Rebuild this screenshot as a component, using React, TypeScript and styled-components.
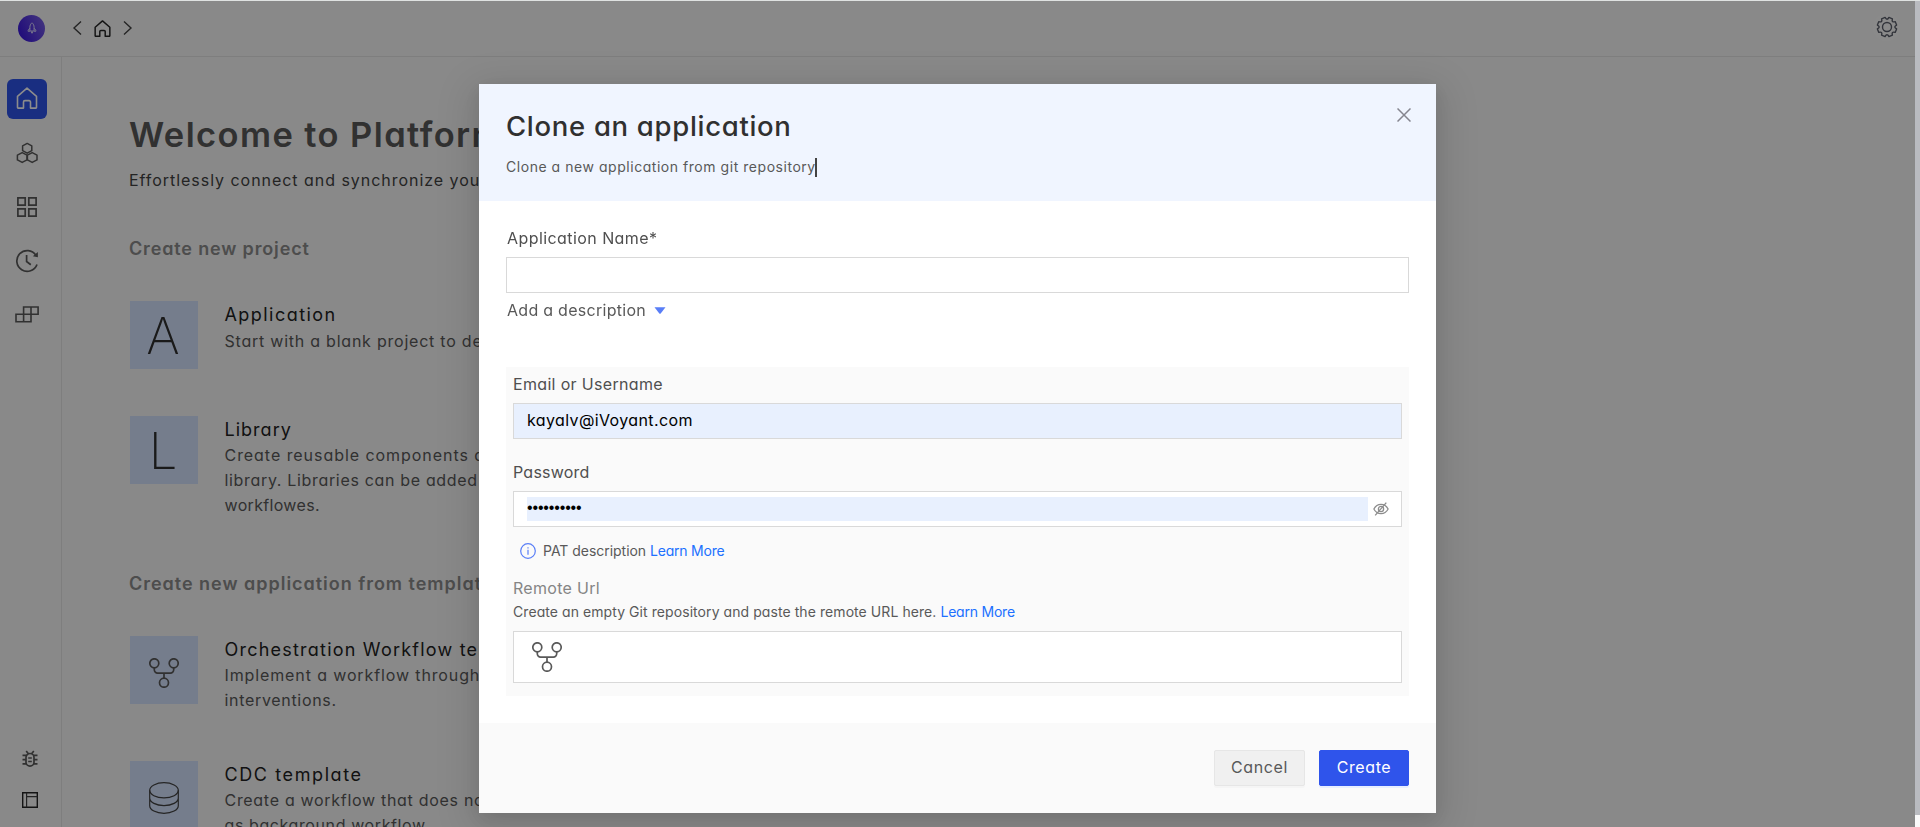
import React from 'react';
import styled, { createGlobalStyle, css } from 'styled-components';

const GlobalStyle = createGlobalStyle`
  *, *::before, *::after { box-sizing: border-box; }
  body {
    margin: 0;
    overflow: hidden;
    background: #fafafa;
    font-family: Inter, 'Open Sans', 'Liberation Sans', sans-serif;
    font-feature-settings: 'cv11';
    font-size: 16px;
    font-weight: 400;
    color: #595959;
  }
  h1, h2, h3, p { margin: 0; font-weight: 400; }
`;

/* ---------- shell ---------- */

const Shell = styled.div`
  display: flex;
  flex-direction: column;
  height: 100vh;
  overflow: hidden;
  border-top: 1px solid #dfe2e1;
`;

const TopBar = styled.header`
  display: flex;
  flex: none;
  align-items: center;
  justify-content: space-between;
  height: 56px;
  padding: 0 20px 1px 18px;
  border-bottom: 1px solid #e6e6e6;
`;

const TopGroup = styled.div`
  display: flex;
  align-items: center;
`;

const Logo = styled.span`
  display: flex;
  align-items: center;
  justify-content: center;
  width: 27px;
  height: 27px;
  margin-right: 27px;
  border-radius: 50%;
  background: linear-gradient(65deg, #3a16e0 10%, #7a60e6 95%);
`;

const NavIcons = styled.nav`
  display: flex;
  align-items: center;
  gap: 11px;
`;

const GearHolder = styled.span`
  display: flex;
  align-items: center;
  justify-content: center;
  width: 27px;
  height: 27px;
  margin-bottom: 2px;
  border-radius: 50%;
  background: #fcfcfc;
`;

const Body = styled.div`
  display: flex;
  flex: 1;
  min-height: 0;
`;

const Sidebar = styled.aside`
  display: flex;
  flex: none;
  flex-direction: column;
  justify-content: space-between;
  width: 62px;
  padding: 22px 0 19px 7px;
  border-right: 1px solid #e6e6e6;
`;

const SideGroup = styled.div<{ $gap: number; $inset?: number }>`
  display: flex;
  flex-direction: column;
  gap: ${(p) => p.$gap}px;
  padding-left: ${(p) => p.$inset ?? 0}px;
`;

const SideButton = styled.span<{ $active?: boolean }>`
  display: flex;
  align-items: center;
  justify-content: center;
  width: 40px;
  height: 40px;
  padding-bottom: 1px;
  border-radius: 6px;
  ${(p) =>
    p.$active &&
    css`
      padding-bottom: 2px;
      background: #2f54eb;
    `}
`;

const Main = styled.main`
  flex: 1;
  padding: 56px 0 0 67px;
  overflow: hidden;
`;

const PageTitle = styled.h1`
  font-size: 34.5px;
  font-weight: 600;
  line-height: 44px;
  letter-spacing: 1.4px;
  white-space: nowrap;
`;

const PageSubtitle = styled.p`
  margin-top: 10px;
  color: #434343;
  line-height: 26px;
  letter-spacing: 0.96px;
  white-space: nowrap;
`;

const SectionTitle = styled.h2<{ $top: number; $spacing: number }>`
  margin: ${(p) => p.$top}px 0 38px;
  color: #8c8c8c;
  font-size: 18px;
  font-weight: 600;
  line-height: 28px;
  letter-spacing: ${(p) => p.$spacing}px;
`;

const CardList = styled.div<{ $gap: number }>`
  display: flex;
  flex-direction: column;
  gap: ${(p) => p.$gap}px;
  padding-left: 1px;
`;

const Card = styled.article`
  display: flex;
  align-items: flex-start;
  gap: 26.5px;
`;

const CardTile = styled.div<{ $glyph?: boolean }>`
  display: flex;
  flex: none;
  align-items: center;
  justify-content: center;
  width: 68px;
  height: 68px;
  padding: ${(p) => (p.$glyph ? '1px 2px 0 0' : '5px 0 0')};
  background: #d6e4ff;
  color: #303030;
  font-size: 51px;
  font-weight: 200;
  line-height: 67px;
`;

const CardTitle = styled.h3<{ $spacing: number }>`
  color: #222;
  font-size: 18px;
  line-height: 27px;
  letter-spacing: ${(p) => p.$spacing}px;
`;

const CardLines = styled.div<{ $top?: number }>`
  padding-top: ${(p) => p.$top ?? 0}px;
`;

const CardLine = styled.p<{ $spacing: number }>`
  line-height: 25px;
  letter-spacing: ${(p) => p.$spacing}px;
  white-space: nowrap;
`;

const ScrollThumb = styled.div`
  position: fixed;
  top: 1px;
  right: 0;
  width: 5px;
  height: 814px;
  background: #b9bbc0;
`;

/* ---------- dialog ---------- */

const Backdrop = styled.div`
  position: fixed;
  inset: 1px 5px 0 0;
  display: flex;
  align-items: flex-start;
  justify-content: center;
  padding-top: 83px;
  overflow: hidden;
  background: rgba(0, 0, 0, 0.45);
`;

const Dialog = styled.section`
  display: flex;
  flex-direction: column;
  width: 957px;
  height: 729px;
  background: #fff;
  box-shadow: 0 6px 16px rgba(0, 0, 0, 0.1), 0 9px 40px 12px rgba(0, 0, 0, 0.1);
`;

const DialogHeader = styled.header`
  display: flex;
  flex: none;
  align-items: flex-start;
  justify-content: space-between;
  height: 117px;
  padding: 24px 25px 0 27px;
  background: #f0f5ff;
`;

const DialogTitle = styled.h2`
  color: #303030;
  font-size: 27.5px;
  font-weight: 500;
  line-height: 36px;
  letter-spacing: 0.69px;
`;

const DialogSubtitle = styled.p`
  display: flex;
  align-items: center;
  margin: 12px 0 0;
  font-size: 14px;
  line-height: 19px;
  letter-spacing: 0.54px;
`;

const Caret = styled.span`
  width: 2px;
  height: 19px;
  margin: 2px 0 0 -1px;
  background: #434343;
`;

const DialogBody = styled.div`
  display: flex;
  flex: 1;
  flex-direction: column;
  padding: 25px 27px 27px;
`;

const Label = styled.label<{ $spacing?: number; $muted?: boolean; $inset?: number }>`
  padding-left: ${(p) => p.$inset ?? 0}px;
  color: ${(p) => (p.$muted ? '#858585' : '#4f4f4f')};
  line-height: 24px;
  letter-spacing: ${(p) => p.$spacing ?? 0.43}px;
`;

const Field = styled.div<{ $filled?: boolean; $height?: number; $inset?: number }>`
  display: flex;
  flex: none;
  align-items: center;
  justify-content: space-between;
  height: ${(p) => p.$height ?? 36}px;
  padding: 0 12px 0 ${(p) => p.$inset ?? 13}px;
  border: 1px solid #d9d9d9;
  background: ${(p) => (p.$filled ? '#e8f0fe' : '#fff')};
  color: #000;
`;

const FieldText = styled.span`
  padding-bottom: 2px;
  line-height: 24px;
  letter-spacing: 0.38px;
`;

const Autofill = styled.span`
  flex: 1;
  height: 24px;
  margin-right: 5px;
  background: #e8f0fe;
  font-family: 'Liberation Sans', sans-serif;
  font-size: 16px;
  line-height: 22px;
  letter-spacing: -0.15px;
`;

const AddDescription = styled.div`
  display: flex;
  align-items: center;
  gap: 8px;
  margin-top: 5px;
  padding-left: 1px;
  line-height: 24px;
  letter-spacing: 0.28px;
`;

const Panel = styled.div`
  display: flex;
  flex-direction: column;
  height: 329px;
  margin-top: 45px;
  padding: 5px 7px 0;
  background: #fafafa;
`;

const PanelField = styled.div<{ $top?: number }>`
  display: flex;
  flex-direction: column;
  gap: 7px;
  margin-top: ${(p) => p.$top ?? 0}px;
`;

const Hint = styled.p<{ $top: number; $inset?: number; $spacing: number }>`
  display: flex;
  align-items: center;
  gap: 7px;
  margin: ${(p) => p.$top}px 0 0 ${(p) => p.$inset ?? 0}px;
  font-size: 14px;
  line-height: 20px;
  letter-spacing: ${(p) => p.$spacing}px;
`;

const Link = styled.a`
  color: #2070ff;
  letter-spacing: -0.22px;
`;

const DialogFooter = styled.footer`
  display: flex;
  flex: none;
  justify-content: flex-end;
  gap: 14px;
  height: 90px;
  padding: 27px 27px 0 0;
  background: #fafafa;
`;

const Button = styled.button<{ $primary?: boolean }>`
  width: ${(p) => (p.$primary ? 90 : 91)}px;
  height: 36px;
  padding: 0 0 2px;
  border: 1px solid ${(p) => (p.$primary ? '#2f54eb' : '#e6e6e6')};
  border-radius: 2px;
  background: ${(p) => (p.$primary ? '#2f54eb' : '#f0f0f0')};
  box-shadow: 0 2px 0 ${(p) => (p.$primary ? '#e6eeff' : 'rgba(0, 0, 0, 0.02)')};
  color: ${(p) => (p.$primary ? '#fff' : '#595959')};
  font: inherit;
  font-feature-settings: inherit;
  letter-spacing: 0.6px;
`;

/* ---------- icons ---------- */

const Rocket = () => (
  <svg width="10" height="12" viewBox="0 0 10 12" fill="none" stroke="#e6e6ff" strokeWidth="0.9" strokeLinejoin="round">
    <path d="M5 .8C3.5 2 2.9 3.6 2.9 5.2V9h4.2V5.2C7.1 3.6 6.5 2 5 .8z" />
    <path d="M2.9 6.2 1.2 8.2V9.3h1.7M7.1 6.2l1.7 2V9.3H7.1M4.1 10.6h1.8M5 9v2.4" />
  </svg>
);

const Chevron = ({ flip }: { flip?: boolean }) => (
  <svg width="11" height="16" viewBox="0 0 11 16" fill="none" stroke="#434343" strokeWidth="1.4">
    <path d={flip ? 'M2 1.5 9 8l-7 6.5' : 'M9 1.5 2 8l7 6.5'} />
  </svg>
);

const House = ({ size, color, weight }: { size: number; color: string; weight: number }) => (
  <svg width={size} height={size} viewBox="0 0 22 22" fill="none" stroke={color} strokeWidth={weight} strokeLinejoin="round">
    <path d="M1.5 9.3 11 1.2l9.5 8.1V20.5a.6.6 0 0 1-.6.6H14.5V15a1.4 1.4 0 0 0-1.4-1.4H8.9A1.4 1.4 0 0 0 7.5 15v6.1H2.1a.6.6 0 0 1-.6-.6z" />
  </svg>
);

const Hexes = () => (
  <svg width="22" height="22" viewBox="0 0 22 22" fill="none" stroke="#595959" strokeWidth="1.5" strokeLinejoin="round">
    <path d="M11.2 1.4 15.8 3.9V8.7L11.2 11.2 6.6 8.7V3.9z" />
    <path d="M6.2 10.7l4.8 2.5v4.7L6.2 20.4l-4.8-2.5v-4.7z" />
    <path d="M16.2 10.7l4.8 2.5v4.7L16.2 20.4l-4.8-2.5v-4.7z" />
  </svg>
);

const Grid = () => (
  <svg width="20" height="20" viewBox="0 0 20 20" fill="none" stroke="#595959" strokeWidth="1.7">
    <path d="M.9.9h7.3v7.3H.9zM11.8.9h7.3v7.3h-7.3zM.9 11.8h7.3v7.3H.9zM11.8 11.8h7.3v7.3h-7.3z" />
  </svg>
);

const Clock = () => (
  <svg width="24" height="24" viewBox="0 0 24 24" fill="none" stroke="#595959" strokeWidth="1.7">
    <path d="M20.9 6.2A10.4 10.4 0 1 0 22 15.5" />
    <path d="M11.6 6v6.5l4.2 3.2" />
    <path d="M22.9 3v5.3l-5.1-1.1z" fill="#595959" stroke="none" />
  </svg>
);

const Blocks = () => (
  <svg width="24" height="17" viewBox="0 0 24 17" fill="none" stroke="#595959" strokeWidth="1.6">
    <path d="M8.6 1h14.5v7.2H8.6zM1 8.2h15v7.6H1zM8.6 8.2v7.6M16 1v7.2" />
  </svg>
);

const Bug = () => (
  <svg width="16" height="18" viewBox="0 0 16 18" fill="none" stroke="#595959" strokeWidth="1.7">
    <path d="M4 7.3a4 3.8 0 0 1 8 0v5a4 3.8 0 0 1-8 0z" />
    <path d="M4.2 1l2 2.5M11.8 1l-2 2.5M.5 5.4h3.8M.5 9.6H4M.5 13.8h3.8M15.5 5.4h-3.8M15.5 9.6H12M15.5 13.8h-3.8M6.2 8h3.6M6.2 11.5h3.6" />
  </svg>
);

const LayoutIcon = () => (
  <svg width="16" height="16" viewBox="0 0 16 16" fill="none" stroke="#262626" strokeWidth="1.4">
    <path d="M.7.7h14.6v14.6H.7z" />
    <path d="M4.6.7v14.6M4.6 4.6h10.7" stroke="#434343" strokeWidth="1.2" />
  </svg>
);

const gearPath = (() => {
  const pts: string[] = [];
  for (let i = 0; i < 8; i++) {
    const at = (deg: number, r: number) => {
      const a = ((i * 45 + deg) * Math.PI) / 180;
      return `${(11 + r * Math.sin(a)).toFixed(2)} ${(11 - r * Math.cos(a)).toFixed(2)}`;
    };
    pts.push(`${i ? 'L' : 'M'}${at(-11, 9.8)}L${at(11, 9.8)}Q${at(22.5, 6)} ${at(34, 9.8)}`);
  }
  return pts.join('') + 'Z';
})();

const Gear = () => (
  <svg width="22" height="22" viewBox="0 0 22 22" fill="none" stroke="#5c606c" strokeWidth="1.4" strokeLinejoin="round">
    <path d={gearPath} transform="rotate(22.5 11 11)" />
    <circle cx="11" cy="11" r="4.5" />
  </svg>
);

const Branch = () => (
  <svg width="30" height="30" viewBox="0 0 30 30" fill="none" stroke="#595959" strokeWidth="1.7">
    <circle cx="5.3" cy="5.3" r="4.5" />
    <circle cx="24.7" cy="5.3" r="4.5" />
    <circle cx="15" cy="24.7" r="4.5" />
    <path d="M5.3 9.8v2a3.3 3.3 0 0 0 3.3 3.3h12.8a3.3 3.3 0 0 0 3.3-3.3v-2M15 15.1v5.1" />
  </svg>
);

const Database = () => (
  <svg width="30" height="32" viewBox="0 0 30 32" fill="none" stroke="#434343" strokeWidth="1.2">
    <ellipse cx="15" cy="8.3" rx="14.3" ry="7.6" />
    <path d="M.7 8.3v15.4c0 4.2 6.4 7.6 14.3 7.6s14.3-3.4 14.3-7.6V8.3M.7 16c0 4.2 6.4 7.6 14.3 7.6S29.3 20.2 29.3 16" />
  </svg>
);

const Close = () => (
  <svg width="14" height="14" viewBox="0 0 14 14" stroke="#85858f" strokeWidth="1.5">
    <path d="M.5.5l13 13M13.5.5l-13 13" />
  </svg>
);

const Triangle = () => (
  <svg width="12" height="7" viewBox="0 0 12 7" fill="#597ef7">
    <path d="M.5.2h11L6.7 6.4a1 1 0 0 1-1.4 0z" />
  </svg>
);

const EyeOff = () => (
  <svg width="16" height="14" viewBox="0 0 16 14" fill="none" stroke="#8c8c8c" strokeWidth="1.3">
    <path d="M.9 7C2.5 3.9 5 2.3 8 2.3S13.5 3.9 15.1 7C13.5 10.1 11 11.7 8 11.7S2.5 10.1.9 7z" />
    <circle cx="8" cy="7" r="2.6" />
    <path d="M13.3.6 2.2 13.4" />
  </svg>
);

const Info = () => (
  <svg width="16" height="16" viewBox="0 0 16 16" fill="none" stroke="#597ef7" strokeWidth="1.2">
    <circle cx="8" cy="8" r="7.3" />
    <path d="M8 6.8v4.9M8 4.2v1.4" />
  </svg>
);

/* ---------- page ---------- */

interface CardData {
  title: string;
  spacing: number;
  lines: [string, number][];
  tile: React.ReactNode;
  linesTop?: number;
}

const projects: CardData[] = [
  {
    title: 'Application',
    spacing: 1.45,
    tile: 'A',
    linesTop: 1,
    lines: [['Start with a blank project to develop', 0.77]],
  },
  {
    title: 'Library',
    spacing: 1.02,
    tile: 'L',
    lines: [
      ['Create reusable components and', 0.95],
      ['library. Libraries can be added to', 0.67],
      ['workflowes.', 0.33],
    ],
  },
];

const templates: CardData[] = [
  {
    title: 'Orchestration Workflow template',
    spacing: 1.22,
    tile: <Branch />,
    lines: [
      ['Implement a workflow through', 0.88],
      ['interventions.', 0.68],
    ],
  },
  {
    title: 'CDC template',
    spacing: 1.6,
    tile: <Database />,
    lines: [
      ['Create a workflow that does not', 0.7],
      ['as background workflow.', 0.6],
    ],
  },
];

const Cards = ({ items, gap }: { items: CardData[]; gap: number }) => (
  <CardList $gap={gap}>
    {items.map((item) => (
      <Card key={item.title}>
        <CardTile $glyph={typeof item.tile === 'string'}>{item.tile}</CardTile>
        <div>
          <CardTitle $spacing={item.spacing}>{item.title}</CardTitle>
          <CardLines $top={item.linesTop}>
            {item.lines.map(([text, spacing]) => (
              <CardLine key={text} $spacing={spacing}>
                {text}
              </CardLine>
            ))}
          </CardLines>
        </div>
      </Card>
    ))}
  </CardList>
);

export default function App() {
  return (
    <>
      <GlobalStyle />
      <Shell>
        <TopBar>
          <TopGroup>
            <Logo>
              <Rocket />
            </Logo>
            <NavIcons>
              <Chevron />
              <House size={17} color="#262626" weight={1.9} />
              <Chevron flip />
            </NavIcons>
          </TopGroup>
          <GearHolder>
            <Gear />
          </GearHolder>
        </TopBar>
        <Body>
          <Sidebar>
            <SideGroup $gap={14}>
              <SideButton $active>
                <House size={22} color="#fff" weight={1.6} />
              </SideButton>
              <SideButton>
                <Hexes />
              </SideButton>
              <SideButton>
                <Grid />
              </SideButton>
              <SideButton>
                <Clock />
              </SideButton>
              <SideButton>
                <Blocks />
              </SideButton>
            </SideGroup>
            <SideGroup $gap={24} $inset={15}>
              <Bug />
              <LayoutIcon />
            </SideGroup>
          </Sidebar>
          <Main>
            <PageTitle>Welcome to Platform</PageTitle>
            <PageSubtitle>Effortlessly connect and synchronize your</PageSubtitle>
            <SectionTitle $top={42} $spacing={0.85}>
              Create new project
            </SectionTitle>
            <Cards items={projects} gap={47} />
            <SectionTitle $top={52} $spacing={0.98}>
              Create new application from template
            </SectionTitle>
            <Cards items={templates} gap={48} />
          </Main>
        </Body>
      </Shell>
      <ScrollThumb />
      <Backdrop>
        <Dialog role="dialog">
          <DialogHeader>
            <div>
              <DialogTitle>Clone an application</DialogTitle>
              <DialogSubtitle>
                Clone a new application from git repository
                <Caret />
              </DialogSubtitle>
            </div>
            <Close />
          </DialogHeader>
          <DialogBody>
            <PanelField>
              <Label $inset={1}>Application Name*</Label>
              <Field />
            </PanelField>
            <AddDescription>
              Add a description
              <Triangle />
            </AddDescription>
            <Panel>
              <PanelField>
                <Label $spacing={0.33}>Email or Username</Label>
                <Field $filled>
                  <FieldText>kayalv@iVoyant.com</FieldText>
                </Field>
              </PanelField>
              <PanelField $top={21}>
                <Label $spacing={0.23}>Password</Label>
                <Field>
                  <Autofill>••••••••••</Autofill>
                  <EyeOff />
                </Field>
              </PanelField>
              <Hint $top={14} $inset={7} $spacing={-0.03}>
                <Info />
                <span>
                  PAT description <Link>Learn More</Link>
                </span>
              </Hint>
              <PanelField $top={15}>
                <Label $muted $spacing={0.3}>
                  Remote Url
                </Label>
              </PanelField>
              <Hint $top={2} $spacing={0.07}>
                <span>
                  Create an empty Git repository and paste the remote URL here. <Link>Learn More</Link>
                </span>
              </Hint>
              <PanelField $top={9}>
                <Field $height={52} $inset={18}>
                  <Branch />
                </Field>
              </PanelField>
            </Panel>
          </DialogBody>
          <DialogFooter>
            <Button>Cancel</Button>
            <Button $primary>Create</Button>
          </DialogFooter>
        </Dialog>
      </Backdrop>
    </>
  );
}
